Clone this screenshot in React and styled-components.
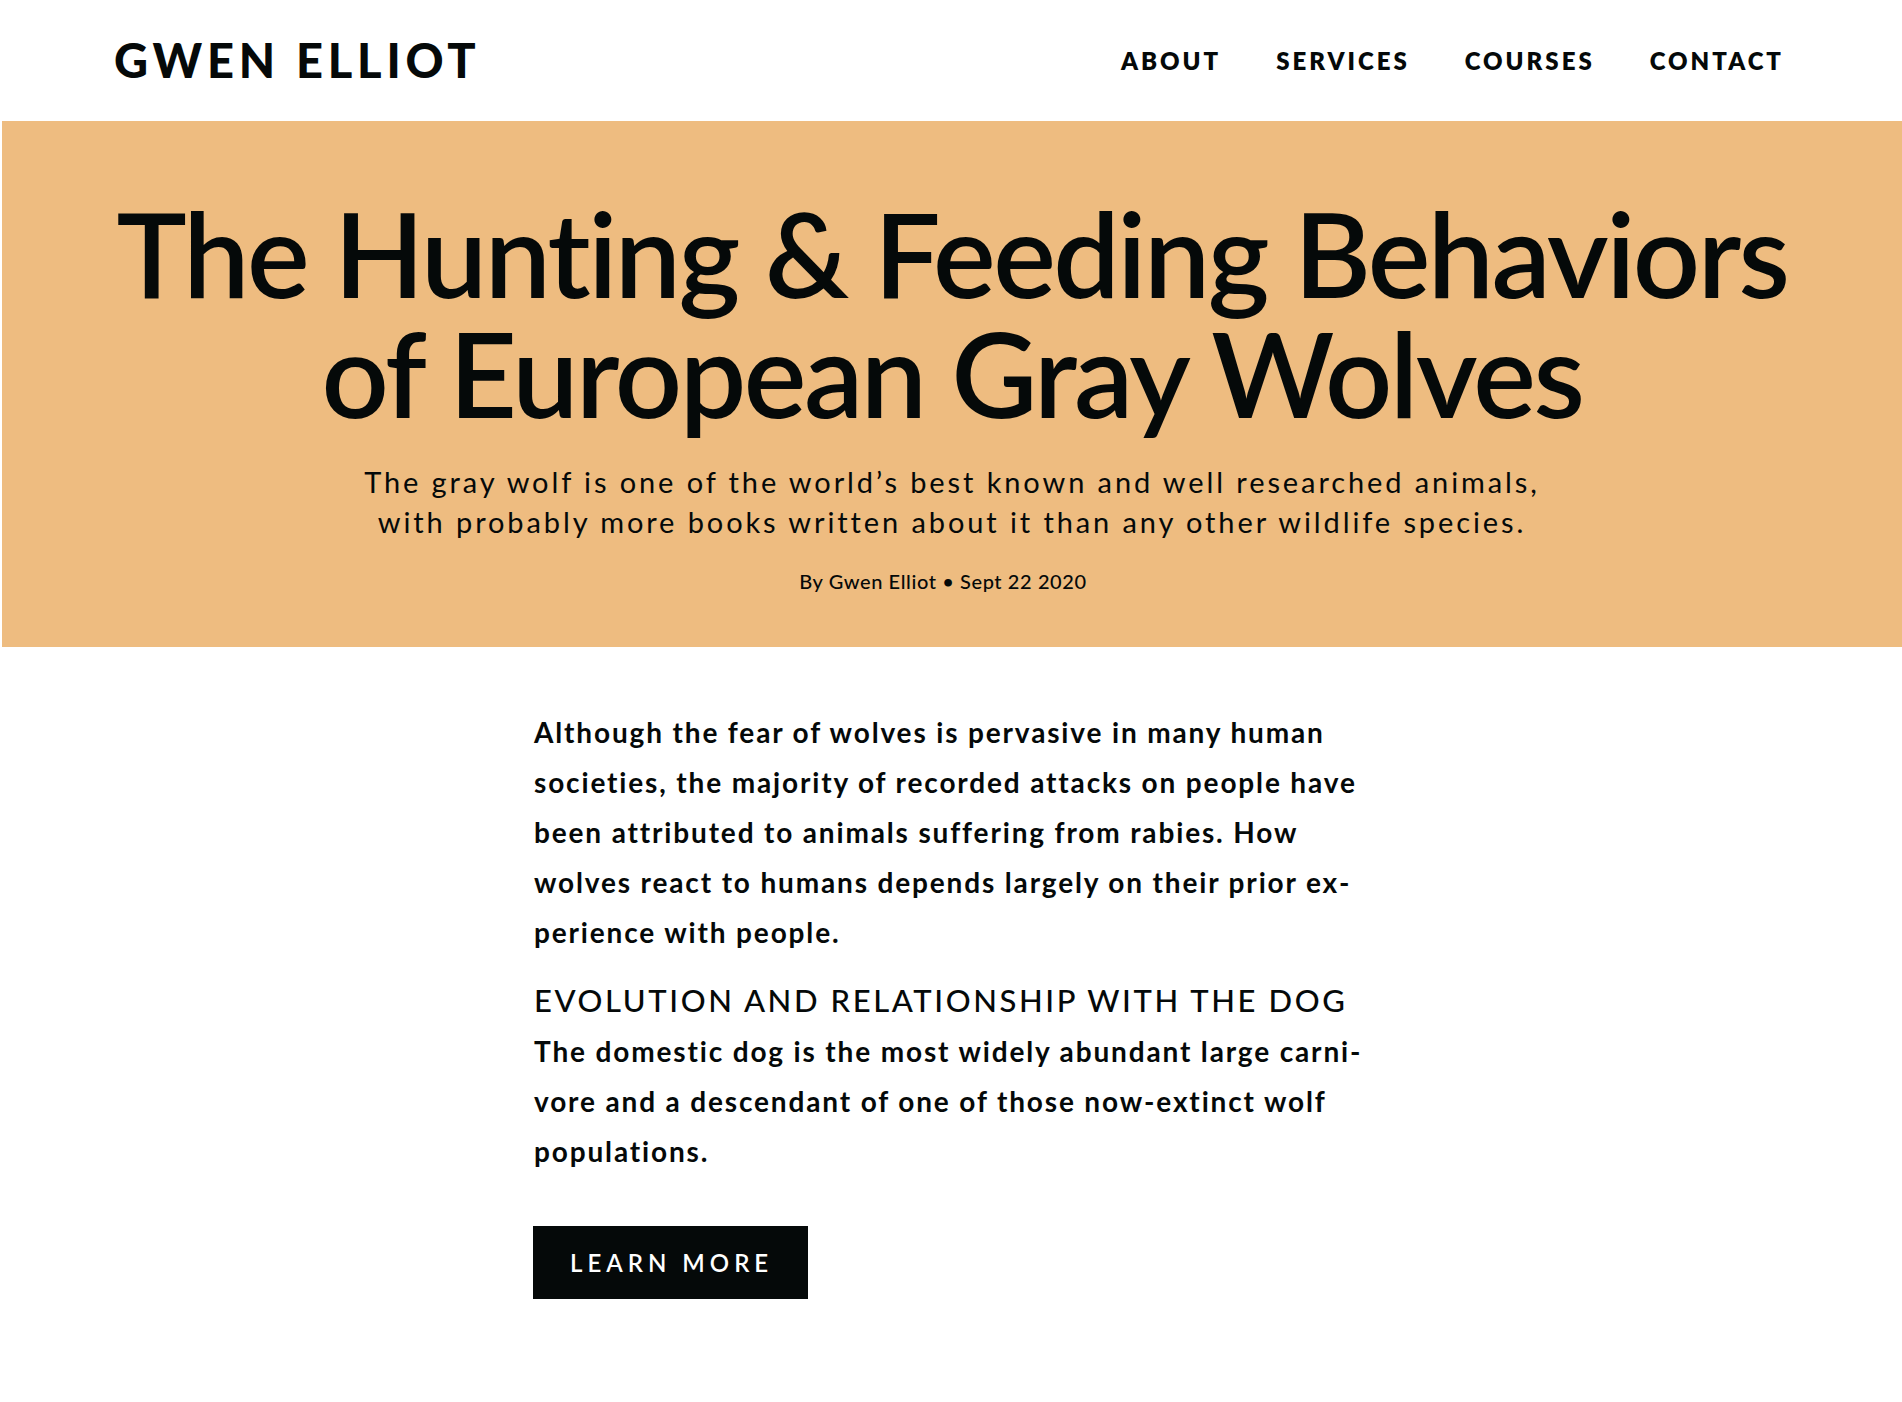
import React from "react";
import styled, { createGlobalStyle } from "styled-components";

const ink = "#050909";
const sand = "#eebc80";

const GlobalStyle = createGlobalStyle`
  html, body { margin: 0; padding: 0; background: #ffffff; }
  body {
    font-family: "Lato", "Noto Sans", "Liberation Sans", sans-serif;
    color: ${ink};
    -webkit-font-smoothing: antialiased;
  }
  * { box-sizing: border-box; }
`;

const Page = styled.div`
  min-height: 1402px;
  display: flex;
  flex-direction: column;
`;

const Header = styled.header`
  height: 121px;
  display: flex;
  align-items: center;
  justify-content: space-between;
  padding: 0 118px 0 114px;
`;

const Logo = styled.div`
  font-size: 47px;
  font-weight: 900;
  letter-spacing: 4.8px;
  line-height: 1;
  text-transform: uppercase;
`;

const Nav = styled.nav`
  display: flex;
  gap: 55px;
`;

const NavLink = styled.a`
  font-size: 24px;
  font-weight: 800;
  letter-spacing: 3px;
  text-transform: uppercase;
  color: ${ink};
  text-decoration: none;
  line-height: 1;
`;

const Hero = styled.section`
  background: ${sand};
  margin-left: 2px;
  padding: 72px 40px 54px;
  display: flex;
  flex-direction: column;
  align-items: center;
  text-align: center;
`;

const Title = styled.h1`
  margin: 0;
  max-width: 1720px;
  font-size: 118px;
  font-weight: 600;
  line-height: 120px;
  letter-spacing: -2.5px;
`;

const Lead = styled.p`
  margin: 29px 0 0;
  max-width: 1210px;
  font-size: 29px;
  font-weight: 400;
  line-height: 40px;
  letter-spacing: 2.9px;
`;

const Byline = styled.p`
  margin: 27px 0 0;
  padding-right: 18px;
  font-size: 20px;
  font-weight: 500;
  line-height: 24px;
  letter-spacing: 0.6px;
`;

const Article = styled.main`
  width: 834px;
  margin: 60px auto 0;
  display: flex;
  flex-direction: column;
  align-items: flex-start;
`;

const Para = styled.p`
  margin: 0;
  font-size: 28px;
  font-weight: 700;
  line-height: 50px;
  letter-spacing: 1.85px;
`;

const SectionHeading = styled.h2`
  margin: 23px 0 6px;
  font-size: 31px;
  font-weight: 500;
  line-height: 40px;
  letter-spacing: 2.6px;
  text-transform: uppercase;
`;

const Button = styled.a`
  margin-top: 50px;
  margin-left: -1px;
  height: 73px;
  display: inline-flex;
  align-items: center;
  padding: 0 35px 0 37px;
  background: ${ink};
  color: #ffffff;
  font-size: 24px;
  font-weight: 600;
  letter-spacing: 5px;
  text-transform: uppercase;
  text-decoration: none;
`;

const navItems = ["About", "Services", "Courses", "Contact"];

const intro =
  "Although the fear of wolves is pervasive in many human societies, the majority of recorded attacks on people have been attributed to animals suffering from rabies. How wolves react to humans depends largely on their prior ex\u00ADperience with people.";
const dogText =
  "The domestic dog is the most widely abundant large carni\u00ADvore and a descendant of one of those now-extinct wolf populations.";

export default function App() {
  return (
    <Page>
      <GlobalStyle />
      <Header>
        <Logo>Gwen Elliot</Logo>
        <Nav>
          {navItems.map((n) => (
            <NavLink key={n} href="#">
              {n}
            </NavLink>
          ))}
        </Nav>
      </Header>
      <Hero>
        <Title>{"The Hunting & Feeding Behaviors of European Gray Wolves"}</Title>
        <Lead>
          {"The gray wolf is one of the world\u2019s best known and well researched animals, with probably more books written about it than any other wildlife species."}
        </Lead>
        <Byline>{"By Gwen Elliot \u2022 Sept 22 2020"}</Byline>
      </Hero>
      <Article>
        <Para>{intro}</Para>
        <SectionHeading>Evolution and relationship with the dog</SectionHeading>
        <Para>{dogText}</Para>
        <Button href="#">Learn more</Button>
      </Article>
    </Page>
  );
}
